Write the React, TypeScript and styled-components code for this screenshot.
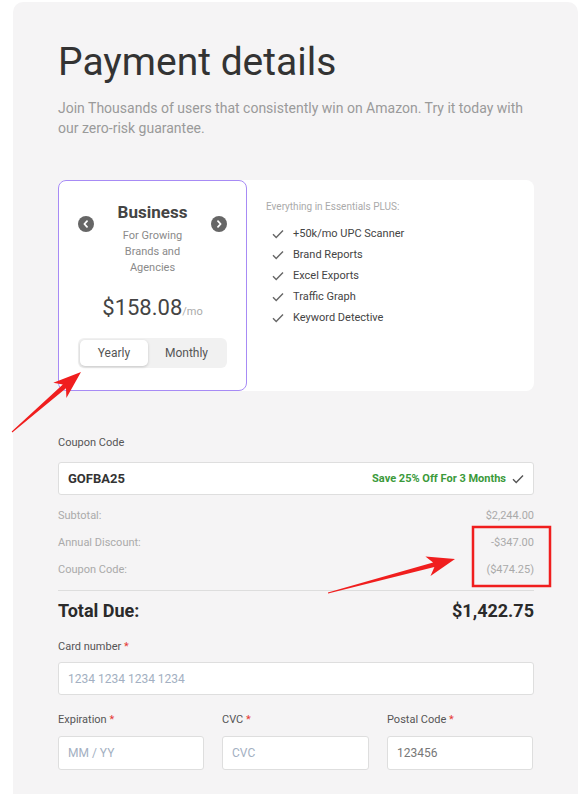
import React from "react";
import styled, { createGlobalStyle } from "styled-components";

const Global = createGlobalStyle`
  html, body { margin: 0; padding: 0; background: #ffffff; }
  body { font-family: Roboto, "Liberation Sans", Arial, sans-serif; }
  * { box-sizing: border-box; }
`;

const Page = styled.div`
  position: relative;
  width: 588px;
  height: 794px;
  overflow: hidden;
  padding: 2px 10px 0 13px;
`;

const Panel = styled.div`
  background: #f5f4f5;
  border-radius: 10px 10px 0 0;
  min-height: 800px;
  padding: 36px 44px 0 45px;
`;

const Title = styled.h1`
  margin: 0;
  font-size: 39px;
  font-weight: 400;
  line-height: 48px;
  color: #333333;
  letter-spacing: 0;
`;

const Subtitle = styled.p`
  margin: 12px 0 0;
  font-size: 14px;
  line-height: 20px;
  color: #9a9a9a;
`;

const PlanBox = styled.div`
  margin-top: 42px;
  display: flex;
  background: #ffffff;
  border-radius: 8px;
  height: 211px;
`;

const PlanCard = styled.div`
  width: 189px;
  flex: none;
  border: 1.5px solid #a78bf5;
  border-radius: 8px;
  display: flex;
  flex-direction: column;
  align-items: center;
  padding-top: 20px;
`;

const PlanHead = styled.div`
  display: flex;
  align-items: flex-start;
  justify-content: space-between;
  width: 100%;
  padding: 0 19px 0 19px;
`;

const NavBtn = styled.div`
  width: 16px;
  height: 16px;
  border-radius: 50%;
  background: #666666;
  margin-top: 15px;
  display: flex;
  align-items: center;
  justify-content: center;
`;

const PlanInfo = styled.div`
  display: flex;
  flex-direction: column;
  align-items: center;
`;

const PlanName = styled.div`
  font-size: 17px;
  font-weight: 700;
  color: #444444;
  line-height: 22px;
`;

const PlanDesc = styled.div`
  margin-top: 5px;
  width: 80px;
  text-align: center;
  font-size: 11px;
  line-height: 16px;
  color: #8a8a8a;
`;

const Price = styled.div`
  margin-top: 19px;
  font-size: 22px;
  color: #444444;
  line-height: 26px;
  & span {
    font-size: 11px;
    color: #aaaaaa;
  }
`;

const Toggle = styled.div`
  margin-top: 13px;
  width: 149px;
  height: 30px;
  border-radius: 6px;
  background: #f1f1f1;
  display: flex;
  padding: 2px;
`;

const ToggleOpt = styled.div<{ $active?: boolean }>`
  flex: ${(p) => (p.$active ? "0 0 68px" : "1")};
  display: flex;
  align-items: center;
  justify-content: center;
  font-size: 12px;
  color: #555555;
  border-radius: 5px;
  background: ${(p) => (p.$active ? "#ffffff" : "transparent")};
  box-shadow: ${(p) => (p.$active ? "0 1px 3px rgba(0,0,0,0.18)" : "none")};
`;

const Features = styled.div`
  padding: 20px 0 0 19px;
`;

const FeatTitle = styled.div`
  font-size: 10px;
  color: #aaaaaa;
  line-height: 14px;
`;

const FeatList = styled.ul`
  list-style: none;
  margin: 12px 0 0;
  padding: 0 0 0 6px;
  display: flex;
  flex-direction: column;
  gap: 6px;
`;

const FeatItem = styled.li`
  display: flex;
  align-items: center;
  gap: 9px;
  font-size: 11px;
  line-height: 15px;
  color: #444444;
`;

const Label = styled.div`
  font-size: 11px;
  color: #555555;
  line-height: 14px;
  & b {
    color: #e53935;
    font-weight: 400;
  }
`;

const CouponLabel = styled(Label)`
  margin-top: 45px;
`;

const Input = styled.div`
  margin-top: 12px;
  height: 33px;
  width: 100%;
  background: #ffffff;
  border: 1px solid #dedede;
  border-radius: 3px;
  display: flex;
  align-items: center;
  justify-content: space-between;
  padding: 0 9px;
`;

const CouponValue = styled.span`
  font-size: 13px;
  font-weight: 700;
  color: #333333;
`;

const CouponNote = styled.span`
  display: flex;
  align-items: center;
  gap: 6px;
  font-size: 11px;
  font-weight: 700;
  color: #3b9a3b;
`;

const Placeholder = styled.span<{ $dark?: boolean }>`
  font-size: 12px;
  color: ${(p) => (p.$dark ? "#777777" : "#a3b0c2")};
`;

const Summary = styled.div`
  margin-top: 14px;
  display: flex;
  flex-direction: column;
  gap: 13px;
  padding-bottom: 13px;
  border-bottom: 1px solid #dddddd;
`;

const SumRow = styled.div`
  display: flex;
  justify-content: space-between;
  font-size: 11px;
  line-height: 14px;
  color: #aaaaaa;
`;

const TotalRow = styled.div`
  margin-top: 9px;
  display: flex;
  justify-content: space-between;
  font-size: 18px;
  font-weight: 700;
  color: #2a2a2a;
  line-height: 22px;
`;

const CardLabel = styled(Label)`
  margin-top: 18px;
`;

const CardInput = styled(Input)`
  margin-top: 8px;
  height: 33px;
`;

const Grid = styled.div`
  margin-top: 18px;
  display: grid;
  grid-template-columns: 146px 147px 146px;
  column-gap: 18px;
`;

const Field = styled.div`
  display: flex;
  flex-direction: column;
`;

const FieldInput = styled(Input)`
  margin-top: 9px;
  height: 34px;
`;

const Overlay = styled.svg`
  position: absolute;
  left: 0;
  top: 0;
  width: 588px;
  height: 794px;
  pointer-events: none;
`;

const Chevron = ({ dir }: { dir: "l" | "r" }) => (
  <svg width="8" height="8" viewBox="0 0 8 8">
    <path
      d={dir === "l" ? "M5 1.2 L2.4 4 L5 6.8" : "M3 1.2 L5.6 4 L3 6.8"}
      stroke="#ffffff"
      strokeWidth="1.8"
      fill="none"
      strokeLinecap="round"
      strokeLinejoin="round"
    />
  </svg>
);

const Check = ({ color = "#666" }: { color?: string }) => (
  <svg width="12" height="10" viewBox="0 0 12 10">
    <path d="M1 5.2 L4.2 8.4 L11 1.4" stroke={color} strokeWidth="1.4" fill="none" />
  </svg>
);

const features = [
  "+50k/mo UPC Scanner",
  "Brand Reports",
  "Excel Exports",
  "Traffic Graph",
  "Keyword Detective",
];

function arrow(x1: number, y1: number, x2: number, y2: number) {
  const dx = x2 - x1;
  const dy = y2 - y1;
  const len = Math.hypot(dx, dy);
  const ux = dx / len;
  const uy = dy / len;
  const nx = -uy;
  const ny = ux;
  const headLen = 28;
  const headW = 10;
  const shaftW = 2.4;
  const bx = x2 - ux * headLen;
  const by = y2 - uy * headLen;
  const nb = bx + ux * 6;
  const nby = by + uy * 6;
  const pts = [
    [x1 + nx * 0.5, y1 + ny * 0.5],
    [nb + nx * shaftW, nby + ny * shaftW],
    [bx + nx * headW, by + ny * headW],
    [x2, y2],
    [bx - nx * headW, by - ny * headW],
    [nb - nx * shaftW, nby - ny * shaftW],
    [x1 - nx * 0.5, y1 - ny * 0.5],
  ];
  return pts.map((p) => p.map((v) => v.toFixed(1)).join(",")).join(" ");
}

export default function App() {
  return (
    <>
      <Global />
      <Page>
        <Panel>
          <Title>Payment details</Title>
          <Subtitle>
            Join Thousands of users that consistently win on Amazon. Try it today with our zero-risk
            guarantee.
          </Subtitle>

          <PlanBox>
            <PlanCard>
              <PlanHead>
                <NavBtn>
                  <Chevron dir="l" />
                </NavBtn>
                <PlanInfo>
                  <PlanName>Business</PlanName>
                  <PlanDesc>For Growing Brands and Agencies</PlanDesc>
                </PlanInfo>
                <NavBtn>
                  <Chevron dir="r" />
                </NavBtn>
              </PlanHead>
              <Price>
                $158.08<span>/mo</span>
              </Price>
              <Toggle>
                <ToggleOpt $active>Yearly</ToggleOpt>
                <ToggleOpt>Monthly</ToggleOpt>
              </Toggle>
            </PlanCard>
            <Features>
              <FeatTitle>Everything in Essentials PLUS:</FeatTitle>
              <FeatList>
                {features.map((f) => (
                  <FeatItem key={f}>
                    <Check />
                    {f}
                  </FeatItem>
                ))}
              </FeatList>
            </Features>
          </PlanBox>

          <CouponLabel>Coupon Code</CouponLabel>
          <Input>
            <CouponValue>GOFBA25</CouponValue>
            <CouponNote>
              Save 25% Off For 3 Months
              <Check color="#555" />
            </CouponNote>
          </Input>

          <Summary>
            <SumRow>
              <span>Subtotal:</span>
              <span>$2,244.00</span>
            </SumRow>
            <SumRow>
              <span>Annual Discount:</span>
              <span>-$347.00</span>
            </SumRow>
            <SumRow>
              <span>Coupon Code:</span>
              <span>($474.25)</span>
            </SumRow>
          </Summary>

          <TotalRow>
            <span>Total Due:</span>
            <span>$1,422.75</span>
          </TotalRow>

          <CardLabel>
            Card number <b>*</b>
          </CardLabel>
          <CardInput>
            <Placeholder>1234 1234 1234 1234</Placeholder>
          </CardInput>

          <Grid>
            <Field>
              <Label>
                Expiration <b>*</b>
              </Label>
              <FieldInput>
                <Placeholder>MM / YY</Placeholder>
              </FieldInput>
            </Field>
            <Field>
              <Label>
                CVC <b>*</b>
              </Label>
              <FieldInput>
                <Placeholder>CVC</Placeholder>
              </FieldInput>
            </Field>
            <Field>
              <Label>
                Postal Code <b>*</b>
              </Label>
              <FieldInput>
                <Placeholder $dark>123456</Placeholder>
              </FieldInput>
            </Field>
          </Grid>
        </Panel>

        <Overlay viewBox="0 0 588 794">
          <polygon points={arrow(12, 432, 81, 372)} fill="#f01e1e" />
          <polygon points={arrow(328, 593, 455, 559)} fill="#f01e1e" />
          <rect x="473" y="527" width="77" height="59" fill="none" stroke="#f01e1e" strokeWidth="2.5" />
        </Overlay>
      </Page>
    </>
  );
}
